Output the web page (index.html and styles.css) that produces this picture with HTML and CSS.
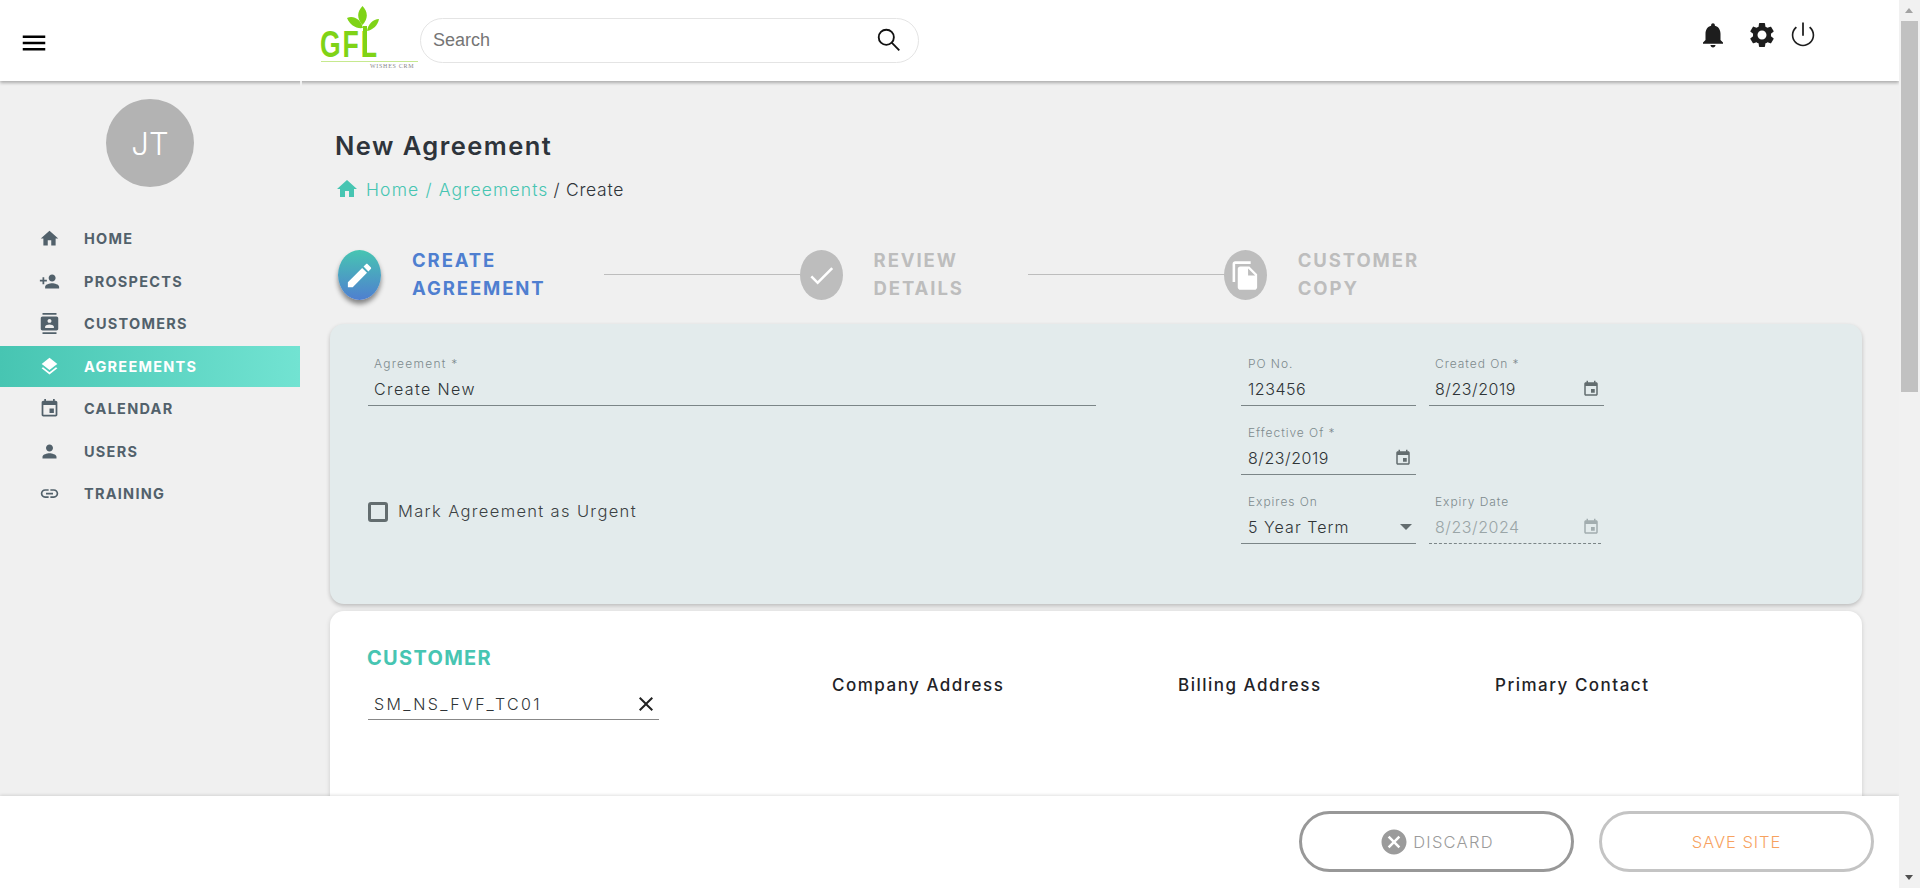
FILE: index.html
```html
<!DOCTYPE html>
<html lang="en">
<head>
<meta charset="utf-8">
<title>New Agreement</title>
<link rel="stylesheet" href="styles.css">
</head>
<body>
<div class="page">
  <div class="viewport">
    <header class="topbar">
      <button class="menu-btn" aria-label="Menu"><svg viewBox="0 0 24 24" class="ic-menu"><path d="M3 18h18v-2H3v2zm0-5h18v-2H3v2zm0-7v2h18V6H3z"/></svg></button>
      <div class="logo">
        <svg class="logo-leaves" viewBox="0 0 45 60"><path d="M22.500 2C28 8 28.500 14 22.500 21 16.500 14 17 8 22.500 2z"/><path d="M7 14c6-3 14 1 16 10-7 1-13-3-16-10z"/><path d="M39 15c-1 6-6 11-12 12 1-7 6-12 12-12z"/><rect x="23" y="22" width="4" height="31"/></svg>
        <span class="logo-word">GFL</span>
        <span class="logo-rule"></span>
        <span class="logo-sub">WISHES CRM</span>
      </div>
      <div class="search"><span class="search-text">Search</span><svg viewBox="0 0 24 24" class="ic-search"><circle cx="9.500" cy="9.500" r="7"/><path d="M14.500 14.500L21.500 21.500"/></svg></div>
      <div class="top-actions">
        <svg viewBox="0 0 24 24" class="ic-top ic-bell"><path d="M12 22c1.100 0 2-.9 2-2h-4c0 1.100.89 2 2 2zm6-6v-5c0-3.070-1.640-5.640-4.500-6.320V4c0-.83-.67-1.500-1.500-1.500s-1.500.67-1.500 1.500v.68C7.630 5.360 6 7.920 6 11v5l-2 2v1h16v-1l-2-2z"/></svg>
        <svg viewBox="0 0 24 24" class="ic-top ic-gear"><path d="M19.140 12.940c.04-.3.06-.61.06-.94 0-.32-.02-.64-.07-.94l2.030-1.580c.18-.14.23-.41.12-.61l-1.920-3.320c-.12-.22-.37-.29-.59-.22l-2.390.96c-.5-.38-1.030-.7-1.620-.94l-.36-2.540c-.04-.24-.24-.41-.48-.41h-3.840c-.24 0-.43.17-.47.41l-.36 2.540c-.59.24-1.130.57-1.620.94l-2.390-.96c-.22-.08-.47 0-.59.22L2.740 8.870c-.12.21-.08.47.12.61l2.030 1.580c-.05.3-.09.63-.09.94s.02.64.07.94l-2.030 1.580c-.18.14-.23.41-.12.61l1.920 3.320c.12.22.37.29.59.22l2.390-.96c.5.38 1.030.7 1.620.94l.36 2.540c.05.24.24.41.48.41h3.840c.24 0 .44-.17.47-.41l.36-2.540c.59-.24 1.130-.56 1.620-.94l2.390.96c.22.08.47 0 .59-.22l1.920-3.320c.12-.22.07-.47-.12-.61l-2.010-1.580zM12 15.600c-1.980 0-3.600-1.620-3.600-3.600s1.620-3.600 3.600-3.600 3.600 1.620 3.600 3.600-1.620 3.600-3.600 3.600z"/></svg>
        <svg viewBox="0 0 24 24" class="ic-top ic-power"><path d="M12.700 2h-1.400v10.500h1.400V2zm5.130 3.170l-1 1C18.500 7.700 19.700 9.700 19.700 12c0 4.250-3.450 7.700-7.700 7.700S4.300 16.250 4.300 12c0-2.300 1.200-4.300 2.870-5.830l-1-1C4.230 6.820 3 9.260 3 12c0 4.970 4.030 9 9 9s9-4.030 9-9c0-2.740-1.230-5.180-3.170-6.830z"/></svg>
      </div>
    </header>

    <div class="body-row">
      <aside class="sidebar">
        <div class="avatar">JT</div>
        <nav class="nav">
          <a class="nav-item"><svg viewBox="0 0 24 24"><path d="M10 20v-6h4v6h5v-8h3L12 3 2 12h3v8z"/></svg>HOME</a>
          <a class="nav-item"><svg viewBox="0 0 24 24"><path d="M15 12c2.210 0 4-1.790 4-4s-1.790-4-4-4-4 1.790-4 4 1.790 4 4 4zm-9-2V7H4v3H1v2h3v3h2v-3h3v-2H6zm9 4c-2.670 0-8 1.340-8 4v2h16v-2c0-2.660-5.330-4-8-4z"/></svg>PROSPECTS</a>
          <a class="nav-item"><svg viewBox="0 0 24 24"><path d="M20 0H4v2h16V0zM4 24h16v-2H4v2zM20 4H4c-1.100 0-2 .9-2 2v12c0 1.100.9 2 2 2h16c1.100 0 2-.9 2-2V6c0-1.100-.9-2-2-2zm-8 2.750c1.240 0 2.250 1.010 2.250 2.250s-1.010 2.250-2.250 2.250S9.750 10.240 9.750 9 10.760 6.750 12 6.750zM17 17H7v-1.500c0-1.670 3.330-2.500 5-2.500s5 .83 5 2.500V17z"/></svg>CUSTOMERS</a>
          <a class="nav-item is-active"><svg viewBox="0 0 24 24"><path d="M11.990 18.540l-7.370-5.730L3 14.070l9 7 9-7-1.630-1.270-7.380 5.740zM12 16l7.360-5.730L21 9l-9-7-9 7 1.630 1.270L12 16z"/></svg>AGREEMENTS</a>
          <a class="nav-item"><svg viewBox="0 0 24 24"><path d="M17 12h-5v5h5v-5zM16 1v2H8V1H6v2H5c-1.110 0-1.990.9-1.990 2L3 19c0 1.100.89 2 2 2h14c1.100 0 2-.9 2-2V5c0-1.100-.9-2-2-2h-1V1h-2zm3 18H5V8h14v11z"/></svg>CALENDAR</a>
          <a class="nav-item"><svg viewBox="0 0 24 24"><path d="M12 12c2.210 0 4-1.790 4-4s-1.790-4-4-4-4 1.790-4 4 1.790 4 4 4zm0 2c-2.670 0-8 1.340-8 4v2h16v-2c0-2.660-5.330-4-8-4z"/></svg>USERS</a>
          <a class="nav-item"><svg viewBox="0 0 24 24"><path d="M3.900 12c0-1.710 1.390-3.100 3.100-3.100h4V7H7c-2.760 0-5 2.240-5 5s2.240 5 5 5h4v-1.900H7c-1.710 0-3.100-1.390-3.100-3.100zM8 13h8v-2H8v2zm9-6h-4v1.900h4c1.710 0 3.100 1.390 3.100 3.100s-1.390 3.100-3.100 3.100h-4V17h4c2.760 0 5-2.240 5-5s-2.240-5-5-5z"/></svg>TRAINING</a>
        </nav>
      </aside>

      <main class="main">
        <h1 class="title">New Agreement</h1>
        <div class="crumbs"><svg viewBox="0 0 24 24"><path d="M10 20v-6h4v6h5v-8h3L12 3 2 12h3v8z"/></svg><span class="crumb-link">Home / Agreements</span><span class="crumb-sep">/ Create</span></div>

        <div class="stepper">
          <div class="step is-current">
            <span class="step-dot"><svg viewBox="0 0 24 24"><path d="M3 17.250V21h3.750L17.810 9.940l-3.750-3.750L3 17.250zM20.710 7.040c.39-.39.39-1.020 0-1.410l-2.340-2.340c-.39-.39-1.020-.39-1.410 0l-1.830 1.830 3.750 3.750 1.830-1.830z"/></svg></span>
            <span class="step-label">CREATE<br>AGREEMENT</span>
          </div>
          <div class="step-line"></div>
          <div class="step">
            <span class="step-dot"><svg viewBox="0 0 24 24"><path d="M9 16.170L4.830 12l-1.420 1.410L9 19 21 7l-1.410-1.410z"/></svg></span>
            <span class="step-label">REVIEW<br>DETAILS</span>
          </div>
          <div class="step-line step-line-wide"></div>
          <div class="step">
            <span class="step-dot"><svg viewBox="0 0 24 24"><path d="M16 1H4c-1.100 0-2 .9-2 2v14h2V3h12V1zm-1 4l6 6v10c0 1.100-.9 2-2 2H7.990C6.890 23 6 22.100 6 21l.01-14c0-1.100.89-2 1.990-2h7zm-1 7h5.500L14 6.500V12z"/></svg></span>
            <span class="step-label">CUSTOMER<br>COPY</span>
          </div>
        </div>

        <section class="panel-form">
          <div class="field field-wide"><label>Agreement *</label><div class="value value-text">Create New</div></div>
          <div class="field"><label>PO No.</label><div class="value">123456</div></div>
          <div class="field field-tight"><label>Created On *</label><div class="value">8/23/2019<svg class="ic-cal" viewBox="0 0 24 24"><path d="M17 12h-5v5h5v-5zM16 1v2H8V1H6v2H5c-1.110 0-1.990.9-1.990 2L3 19c0 1.100.89 2 2 2h14c1.100 0 2-.9 2-2V5c0-1.100-.9-2-2-2h-1V1h-2zm3 18H5V8h14v11z"/></svg></div></div>
          <div class="field field-second"><label>Effective Of *</label><div class="value">8/23/2019<svg class="ic-cal" viewBox="0 0 24 24"><path d="M17 12h-5v5h5v-5zM16 1v2H8V1H6v2H5c-1.110 0-1.990.9-1.990 2L3 19c0 1.100.89 2 2 2h14c1.100 0 2-.9 2-2V5c0-1.100-.9-2-2-2h-1V1h-2zm3 18H5V8h14v11z"/></svg></div></div>
          <div class="urgent"><span class="checkbox"></span><span>Mark Agreement as Urgent</span></div>
          <div class="field"><label>Expires On</label><div class="value value-select">5 Year Term<span class="caret"></span></div></div>
          <div class="field field-tight is-disabled"><label>Expiry Date</label><div class="value">8/23/2024<svg class="ic-cal" viewBox="0 0 24 24"><path d="M17 12h-5v5h5v-5zM16 1v2H8V1H6v2H5c-1.110 0-1.990.9-1.990 2L3 19c0 1.100.89 2 2 2h14c1.100 0 2-.9 2-2V5c0-1.100-.9-2-2-2h-1V1h-2zm3 18H5V8h14v11z"/></svg></div></div>
        </section>

        <section class="panel-customer">
          <div class="customer-col">
            <h2 class="customer-title">CUSTOMER</h2>
            <div class="customer-input"><span>SM_NS_FVF_TC01</span><svg viewBox="0 0 24 24"><path d="M19 6.410L17.590 5 12 10.590 6.410 5 5 6.410 10.590 12 5 17.590 6.410 19 12 13.410 17.590 19 19 17.590 13.410 12z"/></svg></div>
          </div>
          <h3 class="info-head">Company Address</h3>
          <h3 class="info-head">Billing Address</h3>
          <h3 class="info-head">Primary Contact</h3>
        </section>
      </main>
    </div>

    <footer class="actionbar">
      <button class="btn btn-discard"><svg viewBox="0 0 24 24"><path d="M12 2C6.470 2 2 6.470 2 12s4.470 10 10 10 10-4.470 10-10S17.530 2 12 2zm5 13.590L15.590 17 12 13.410 8.410 17 7 15.590 10.590 12 7 8.410 8.410 7 12 10.590 15.590 7 17 8.410 13.410 12 17 15.590z"/></svg>DISCARD</button>
      <button class="btn btn-save">SAVE SITE</button>
    </footer>
  </div>
  <div class="scrollbar">
    <span class="arrow arrow-up"></span>
    <span class="thumb"></span>
    <span class="arrow arrow-down"></span>
  </div>
</div>
</body>
</html>
```
FILE: styles.css
```css
* { box-sizing: border-box; }
html, body { margin: 0; padding: 0; height: 100%; overflow: hidden; }
body { font-family: Inter, "Noto Sans", "Liberation Sans", sans-serif; color: #2f343a; background: #f0f0f0; }
svg { display: block; fill: currentColor; flex: none; }
h1, h2, h3 { margin: 0; }

.page { display: flex; width: 1920px; height: 888px; overflow: hidden; }
.viewport { position: relative; flex: 1; min-width: 0; height: 888px; overflow: hidden; background: #f0f0f0; }

/* top bar */
.topbar { position: relative; z-index: 3; display: flex; align-items: flex-start; height: 81px; background: #fff; box-shadow: 0 2px 3px rgba(0,0,0,.28); }
.topbar::after { content: ""; position: absolute; left: 300px; top: 81px; width: 2px; height: 5px; background: #f0f0f0; }
.menu-btn { display: block; margin: 28px 0 0 19px; padding: 0; width: 30px; height: 30px; border: 0; background: none; color: #000; }
.ic-menu { width: 30px; height: 30px; }
.logo { position: relative; width: 100px; height: 72px; margin: 4px 0 0 271px; }
.logo-leaves { position: absolute; left: 20px; top: 0; width: 45px; height: 60px; color: #7fd316; }
.logo-word { position: absolute; left: 0; top: 23px; font: 700 36px/36px "Liberation Sans", sans-serif; letter-spacing: 2.500px; color: #7fd316; transform: scaleX(.74); transform-origin: 0 0; }
.logo-rule { position: absolute; left: 1px; top: 57px; width: 97px; height: 1px; background: #c6e98f; }
.logo-sub { position: absolute; left: 50px; top: 58px; font: 400 6px/8px "Liberation Serif", serif; letter-spacing: .7px; color: #8a8a8a; }
.search { display: flex; align-items: center; justify-content: space-between; width: 499px; height: 45px; margin: 18px 0 0 0; padding: 0 16px 0 12px; border: 1px solid #e4e4e4; border-radius: 23px; background: #fff; }
.search-text { font: 400 18px/22px "Liberation Sans", sans-serif; color: #757575; position: relative; top: -1px; }
.ic-search { width: 26px; height: 26px; position: relative; top: -1px; fill: none; stroke: #111; stroke-width: 1.700; }
.top-actions { display: flex; align-items: center; margin: 20px 0 0 auto; padding-right: 81px; }
.ic-top { width: 30px; height: 30px; color: #1d1d1d; }
.ic-bell { margin-right: 19px; }
.ic-gear { margin-right: 11px; }
.ic-power { position: relative; top: 0; }

/* layout */
.body-row { display: flex; }
.sidebar { width: 300px; flex: none; padding-top: 18px; }
.avatar { display: flex; align-items: center; justify-content: center; width: 88px; height: 88px; margin: 0 auto 0 106px; border-radius: 50%; background: #b3b3b3; color: #fff; font-size: 31px; font-weight: 300; }
.nav { margin-top: 30.500px; }
.nav-item { display: flex; align-items: center; height: 42.500px; padding-left: 39px; gap: 24px; font-size: 14.500px; font-weight: 700; letter-spacing: 1.250px; color: #52616b; }
.nav-item svg { width: 21px; height: 21px; }
.is-active { height: 41px; margin: .5px 0 1px; color: #fff; background: linear-gradient(90deg, #47c5b2, #72e3d2); }

.main { flex: 1; min-width: 0; padding: 0 37px 0 30px; }
.title { margin: 49px 0 0 5px; font-size: 25.500px; line-height: 32px; font-weight: 600; color: #2e343b; letter-spacing: 1.450px; }
.crumbs { display: flex; align-items: center; height: 24px; margin: 15px 0 0 5px; font-size: 17.500px; font-weight: 300; }
.crumbs svg { width: 24px; height: 24px; margin-right: 7px; color: #47c5b2; }
.crumb-link { color: #47c5b2; letter-spacing: 1.150px; }
.crumb-sep { margin-left: 5px; color: #2f343a; letter-spacing: .7px; }

/* stepper */
.stepper { display: flex; align-items: center; height: 50px; margin: 49px 0 0 8px; }
.step { display: flex; align-items: center; flex: none; color: #bdbdbd; }
.step-dot { display: flex; align-items: center; justify-content: center; width: 43px; height: 50px; border-radius: 50%; background: #bdbdbd; color: #fff; flex: none; }
.step-dot svg { width: 31px; height: 31px; }
.step-label { position: relative; top: -1px; margin-left: 31px; font-size: 18.500px; line-height: 28px; font-weight: 700; letter-spacing: 1.900px; }
.is-current { color: #4f7fd0; }
.is-current .step-dot { background: linear-gradient(180deg, #47c5b2, #4f7fd0); box-shadow: 0 4px 5px rgba(0,0,0,.45); }
.step-line { flex: none; width: 196px; height: 1px; margin-left: 58px; margin-bottom: 2px; background: #bdbdbd; }
.step-line-wide { margin-left: 64px; }

/* form panel */
.panel-form { display: grid; grid-template-columns: 860px 175px 175px; grid-template-rows: 49px 49px 49px; column-gap: 13px; row-gap: 20px; align-content: start; height: 280px; margin-top: 24px; padding: 33px 0 0 38px; border-radius: 14px; background: #e3ebec; box-shadow: 0 2px 4px rgba(0,0,0,.22); }
.field { border-bottom: 1px solid #7b8587; }
.field label { display: block; padding-left: 7px; font-size: 12px; line-height: 14px; font-weight: 300; color: #7d8a8c; letter-spacing: .95px; }
.value { display: flex; align-items: center; justify-content: space-between; height: 34px; padding: 6px 4px 4px 7px; font-size: 16px; font-weight: 300; color: #2f3437; letter-spacing: .55px; }
.field-wide { width: 728px; }
.field-wide label, .field-wide .value, .field-tight label, .field-tight .value { padding-left: 6px; }
.field-wide label { letter-spacing: 1.250px; }
.field-second { grid-column: 2; }
.value-text { letter-spacing: 1.400px; }
.value-select { letter-spacing: 1.050px; }
.ic-cal { width: 18px; height: 18px; color: #636d6f; }
.caret { width: 0; height: 0; margin-right: 0; border-left: 6px solid transparent; border-right: 6px solid transparent; border-top: 6px solid #636d6f; }
.urgent { display: flex; align-items: flex-start; grid-column: 1; padding-top: 6px; gap: 10px; font-size: 16.500px; font-weight: 300; color: #3b4143; letter-spacing: 1.350px; }
.checkbox { width: 20px; height: 20px; margin-top: 1px; border: 3px solid #636d6f; border-radius: 3px; }
.is-disabled { margin-right: 3px; border-bottom: 1px dashed #7b8587; }
.is-disabled .value { padding-right: 1px; color: #9aa5a7; }
.is-disabled .ic-cal { color: #a2adaf; }

/* customer */
.panel-customer { display: grid; grid-template-columns: 464px 346px 317px 1fr; align-items: start; height: 320px; margin-top: 7px; padding: 34px 0 0 38px; border-radius: 14px; background: #fff; box-shadow: 0 1px 5px rgba(0,0,0,.14); }
.customer-title { margin-left: -1px; font-size: 20px; line-height: 26px; font-weight: 700; color: #47c5b2; letter-spacing: 1.300px; }
.customer-input { display: flex; align-items: center; justify-content: space-between; width: 291px; height: 33px; margin-top: 16px; padding: 1px 8px 0 6px; border-bottom: 1px solid #888; font-size: 16px; font-weight: 300; color: #2f3437; letter-spacing: 2.350px; }
.customer-input svg { width: 24px; height: 24px; color: #222; margin-right: -7px; }
.info-head { margin-top: 27px; font-size: 17px; line-height: 26px; font-weight: 500; color: #1f2327; letter-spacing: 1.500px; }

/* footer */
.actionbar { position: absolute; left: 0; right: 0; bottom: 0; z-index: 4; display: flex; justify-content: flex-end; gap: 25px; height: 92px; padding: 15px 25px 0 0; background: #fff; box-shadow: 0 -1px 3px rgba(0,0,0,.12); }
.btn { display: flex; align-items: center; justify-content: center; width: 275px; height: 61px; border-radius: 31px; background: #fff; font: 300 16.500px Inter, sans-serif; letter-spacing: 1.250px; }
.btn svg { width: 30px; height: 30px; margin-right: 4px; }
.btn-discard { border: 3px solid #989898; color: #9b9b9b; }
.btn-save { border: 3px solid #c4c4c4; color: #f7a25f; letter-spacing: .95px; }

/* scrollbar */
.scrollbar { position: relative; display: flex; flex-direction: column; align-items: center; width: 21px; flex: none; height: 888px; background: #f1f1f1; }
.thumb { width: 17px; height: 371px; margin-top: 21px; margin-left: 0; background: #c1c1c1; }
.arrow { position: absolute; left: 6px; width: 0; height: 0; border-left: 4.500px solid transparent; border-right: 4.500px solid transparent; }
.arrow-up { top: 8px; border-bottom: 5px solid #a3a3a3; }
.arrow-down { bottom: 8px; border-top: 5px solid #505050; }
```
